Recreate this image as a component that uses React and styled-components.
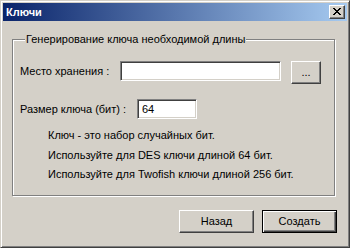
import React from "react";
import styled, { createGlobalStyle } from "styled-components";

const Global = createGlobalStyle`
  html, body { margin: 0; padding: 0; background: #d4d0c8; }
  body { font-family: "Liberation Sans", Arial, sans-serif; font-size: 11px; color: #000; }
  * { box-sizing: border-box; }
`;

const Window = styled.div`
  width: 350px;
  height: 248px;
  background: #d4d0c8;
  border-top: 1px solid #d4d0c8;
  border-left: 1px solid #d4d0c8;
  border-right: 1px solid #404040;
  border-bottom: 1px solid #404040;
  box-shadow: inset 1px 1px 0 #fff, inset -1px -1px 0 #808080;
  padding: 2px;
  display: flex;
  flex-direction: column;
`;

const TitleBar = styled.div`
  height: 18px;
  display: flex;
  align-items: center;
  justify-content: space-between;
  padding: 0 2px 0 3px;
  background: linear-gradient(to right, #0a246a, #a6caf0);
`;

const Title = styled.span`
  color: #fff;
  font-weight: bold;
  font-size: 11px;
`;

const RaisedButton = styled.button`
  font-family: inherit;
  font-size: 11px;
  color: #000;
  background: #d4d0c8;
  margin: 0;
  padding: 0;
  border-top: 1px solid #fff;
  border-left: 1px solid #fff;
  border-right: 1px solid #404040;
  border-bottom: 1px solid #404040;
  box-shadow: inset -1px -1px 0 #808080;
  display: flex;
  align-items: center;
  justify-content: center;
`;

const CloseButton = styled(RaisedButton)`
  width: 16px;
  height: 14px;
  padding-bottom: 1px;
`;

const Body = styled.div`
  flex: 1;
  display: flex;
  flex-direction: column;
  padding: 12px 10px 0 9px;
`;

const Group = styled.fieldset`
  margin: 0 2px 0 0;
  min-width: 0;
  padding: 15px 10px 10px 7px;
  border: 1px solid #808080;
  box-shadow: inset 1px 1px 0 #fff, 1px 1px 0 #fff;
`;

const Legend = styled.legend`
  padding: 0 1px;
  margin-left: 5px;
  line-height: 13px;
  background: #d4d0c8;
`;

const Row = styled.div`
  display: flex;
  align-items: flex-start;
  margin-top: ${(p) => p.$gap || 0}px;
`;

const Label = styled.label`
  width: ${(p) => p.$w}px;
  flex: none;
  height: 20px;
  line-height: 20px;
  white-space: nowrap;
`;

const TextBox = styled.input`
  width: ${(p) => p.$w}px;
  height: 20px;
  font-family: inherit;
  font-size: 11px;
  color: #000;
  background: #fff;
  margin: 0;
  padding: 0 0 0 4px;
  outline: none;
  border-top: 1px solid #808080;
  border-left: 1px solid #808080;
  border-right: 1px solid #fff;
  border-bottom: 1px solid #fff;
  box-shadow: inset 1px 1px 0 #404040, inset -1px -1px 0 #d4d0c8;
`;

const BrowseButton = styled(RaisedButton)`
  width: 30px;
  height: 23px;
  margin-left: 10px;
  padding-bottom: 2px;
`;

const Info = styled.div`
  margin-top: 7px;
  padding-left: 28px;
  line-height: 19.5px;
`;

const Actions = styled.div`
  display: flex;
  justify-content: flex-end;
  gap: 8px;
  margin-top: 14px;
`;

const DialogButton = styled(RaisedButton)`
  width: 75px;
  height: 23px;
  ${(p) =>
    p.$default &&
    `
    border: 1px solid #000;
    box-shadow: inset 1px 1px 0 #fff, inset -1px -1px 0 #404040, inset -2px -2px 0 #808080;
  `}
`;

export default function App() {
  return (
    <>
      <Global />
      <Window>
        <TitleBar>
          <Title>Ключи</Title>
          <CloseButton aria-label="Закрыть">
            <svg width="8" height="7" viewBox="0 0 8 7" shapeRendering="crispEdges">
              <path
                fill="#000"
                d="M0 0h2v1h-2zM6 0h2v1h-2zM1 1h2v1h-2zM5 1h2v1h-2zM2 2h4v1h-4zM3 3h2v1h-2zM2 4h4v1h-4zM1 5h2v1h-2zM5 5h2v1h-2zM0 6h2v1h-2zM6 6h2v1h-2z"
              />
            </svg>
          </CloseButton>
        </TitleBar>
        <Body>
          <Group>
            <Legend>Генерирование ключа необходимой длины</Legend>
            <Row>
              <Label $w={100}>Место хранения :</Label>
              <TextBox $w={161} defaultValue="" />
              <BrowseButton>...</BrowseButton>
            </Row>
            <Row $gap={15}>
              <Label $w={117}>Размер ключа (бит) :</Label>
              <TextBox $w={60} defaultValue="64" />
            </Row>
            <Info>
              <div>Ключ - это набор случайных бит.</div>
              <div>Используйте для DES ключи длиной 64 бит.</div>
              <div>Используйте для Twofish ключи длиной 256 бит.</div>
            </Info>
          </Group>
          <Actions>
            <DialogButton>Назад</DialogButton>
            <DialogButton $default>Создать</DialogButton>
          </Actions>
        </Body>
      </Window>
    </>
  );
}
